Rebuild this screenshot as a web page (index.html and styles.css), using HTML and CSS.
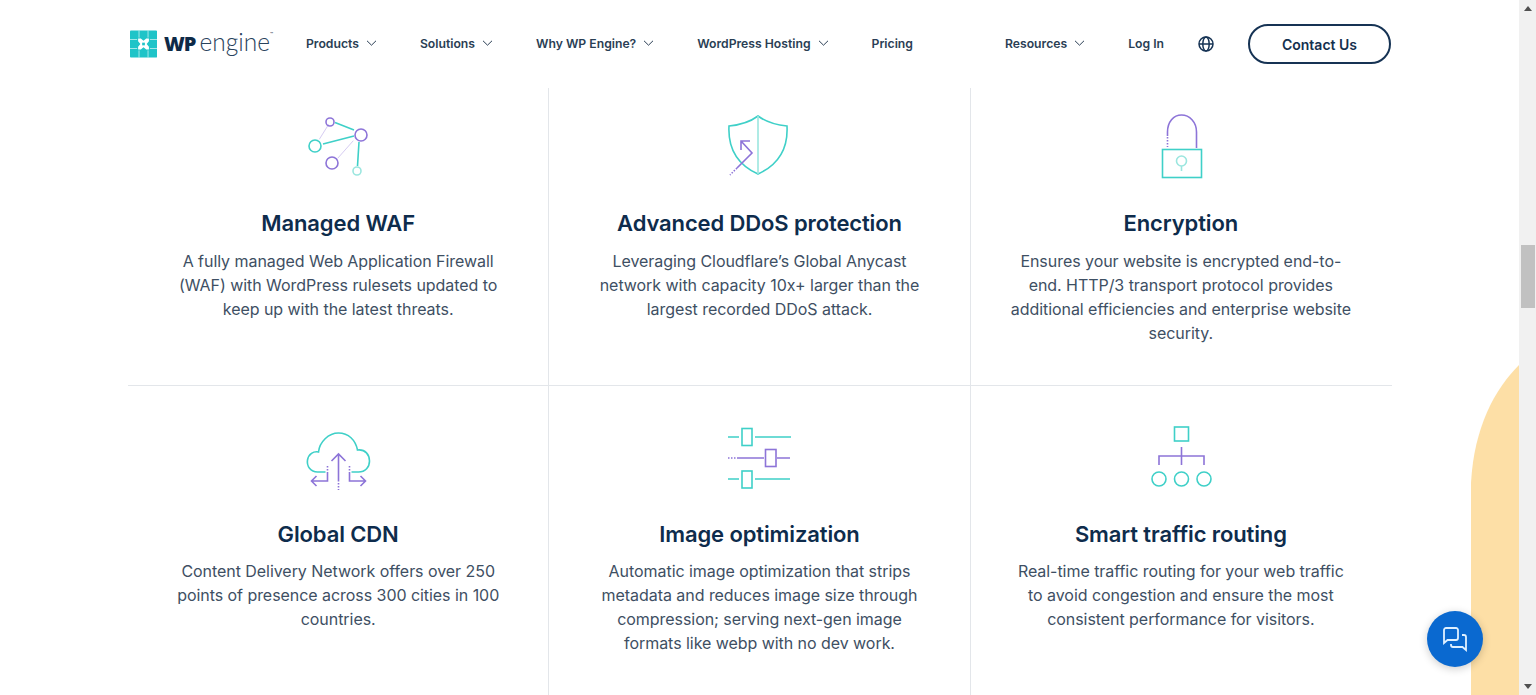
FILE: index.html
```html
<!DOCTYPE html>
<html lang="en">
<head>
  <meta charset="UTF-8" />
  <meta name="viewport" content="width=device-width, initial-scale=1.0" />
  <title>WP Engine - Security and Performance</title>
  <link rel="stylesheet" href="styles.css">
</head>
<body>
  <div class="page">
    <!-- Header -->
    <header class="site-header">
      <a class="logo" href="#">
        <svg class="logo-mark" viewBox="0 0 30 30" width="28" height="28">
          <rect width="30" height="30" rx="1" fill="#1fc4c8"/>
          <path d="M10 0v8M20 0v8M10 22v8M20 22v8M0 10h8M0 20h8M22 10h8M22 20h8" stroke="#d8f5f5" stroke-width=".8"/>
          <path d="M9 9h3l3 2.500 3-2.500h3v3l-2.500 3 2.500 3v3h-3l-3-2.500-3 2.500H9v-3l2.500-3L9 12z" fill="#fff"/>
          <rect x="13.500" y="13.500" width="3" height="3" fill="#1fc4c8"/>
        </svg>
        <span class="logo-wp">WP</span><span class="logo-engine">engine</span><span class="logo-tm">™</span>
      </a>
      <nav class="main-nav">
        <a href="#">Products <svg class="chev" viewBox="0 0 11 6"><path d="M1 .8l4.500 4.400L10 .8"/></svg></a>
        <a href="#">Solutions <svg class="chev" viewBox="0 0 11 6"><path d="M1 .8l4.500 4.400L10 .8"/></svg></a>
        <a href="#">Why WP Engine? <svg class="chev" viewBox="0 0 11 6"><path d="M1 .8l4.500 4.400L10 .8"/></svg></a>
        <a href="#">WordPress Hosting <svg class="chev" viewBox="0 0 11 6"><path d="M1 .8l4.500 4.400L10 .8"/></svg></a>
        <a href="#">Pricing</a>
      </nav>
      <div class="right-nav">
        <a href="#">Resources <svg class="chev" viewBox="0 0 11 6"><path d="M1 .8l4.500 4.400L10 .8"/></svg></a>
        <a href="#">Log In</a>
        <svg class="globe" viewBox="0 0 16 16" width="16" height="16">
          <circle cx="8" cy="8" r="7"/>
          <ellipse cx="8" cy="8" rx="3.200" ry="7"/>
          <path d="M1 8h14"/>
        </svg>
        <a class="contact-btn" href="#">Contact Us</a>
      </div>
    </header>

    <!-- Feature grid -->
    <main class="features">
      <section class="feature first-row">
        <svg class="feature-icon" viewBox="-2 0 100 90" width="100" height="90">
          <path class="thin-purple" d="M38.700 24.300L29.300 39.300M63.300 40.700L47.700 58.300"/>
          <path class="teal" d="M45 22.500L64 30M33 44L64 36M69 42L67.500 66"/>
          <circle class="purple" cx="40" cy="22" r="4"/>
          <circle class="purple" cx="71" cy="35" r="6"/>
          <circle class="teal" cx="25" cy="46" r="6"/>
          <circle class="purple" cx="42" cy="63" r="6"/>
          <circle class="teal light" cx="67" cy="71" r="4"/>
        </svg>
        <h3>Managed WAF</h3>
        <p>A fully managed Web Application Firewall (WAF) with WordPress rulesets updated to keep up with the latest threats.</p>
      </section>
      <section class="feature first-row">
        <svg class="feature-icon" viewBox="-1 0 100 90" width="100" height="90">
          <path class="teal" d="M48 16C40 22 29 25 19 26C18 45 24 63 48 74C72 63 78 45 77 26C67 25 56 22 48 16Z"/>
          <path class="teal light" d="M48 16V74"/>
          <path class="purple" d="M31 41L42 53L27 68M31 50V41H40"/>
          <path class="purple dotted" d="M27 68L20 75"/>
        </svg>
        <h3>Advanced DDoS protection</h3>
        <p>Leveraging Cloudflare’s Global Anycast network with capacity 10x+ larger than the largest recorded DDoS attack.</p>
      </section>
      <section class="feature first-row no-border">
        <svg class="feature-icon" viewBox="0.500 0 100 90" width="100" height="90">
          <path class="purple" d="M37 36V32C37 22 43 15 51 15C59 15 66 22 66 32V48"/>
          <path class="purple dotted" d="M37 37V47"/>
          <rect class="teal" x="32" y="49.500" width="39" height="28"/>
          <circle class="teal light" cx="51" cy="61" r="5"/>
          <path class="teal light" d="M51 66V71"/>
        </svg>
        <h3>Encryption</h3>
        <p>Ensures your website is encrypted end-to-end. HTTP/3 transport protocol provides additional efficiencies and enterprise website security.</p>
      </section>
      <section class="feature">
        <svg class="feature-icon" viewBox="-1.500 0 100 81" width="100" height="81">
          <path class="teal" d="M36 52H28C21 52 17 46 18 40C19 34 24 31 29 32C30 22 39 13 49 13C59 13 66 20 68 30C76 29 80 35 80 41C80 47 76 52 69 52H62"/>
          <path class="purple" d="M49 60V34M42 41L49 34L56 41M38 53V61H22M27 56L22 61L27 66M60 53V61H76M71 56L76 61L71 66"/>
          <path class="purple dotted" d="M38 46V53M60 46V53M49 60V70"/>
        </svg>
        <h3>Global CDN</h3>
        <p>Content Delivery Network offers over 250 points of presence across 300 cities in 100 countries.</p>
      </section>
      <section class="feature">
        <svg class="feature-icon" viewBox="-1 0 100 81" width="100" height="81">
          <path class="teal" d="M18 17H29M45 17H81M18 59H29M45 59H80"/>
          <rect class="teal" x="32" y="8.500" width="10" height="17"/>
          <rect class="teal" x="32" y="51" width="10" height="17"/>
          <path class="purple" d="M27 38H54M67 38H80"/>
          <path class="purple dotted" d="M18 38H27"/>
          <rect class="purple" x="55.500" y="29.500" width="10.500" height="17"/>
        </svg>
        <h3>Image optimization</h3>
        <p>Automatic image optimization that strips metadata and reduces image size through compression; serving next-gen image formats like webp with no dev work.</p>
      </section>
      <section class="feature no-border">
        <svg class="feature-icon" viewBox="0.500 0 100 81" width="100" height="81">
          <rect class="teal" x="44" y="7" width="14" height="14"/>
          <path class="purple" d="M51 27V45M28.500 45V36H73.500V45"/>
          <circle class="teal" cx="28.500" cy="59" r="7"/>
          <circle class="teal" cx="51" cy="59" r="7"/>
          <circle class="teal" cx="73.500" cy="59" r="7"/>
        </svg>
        <h3>Smart traffic routing</h3>
        <p>Real-time traffic routing for your web traffic to avoid congestion and ensure the most consistent performance for visitors.</p>
      </section>
    </main>

    <!-- Decorative curve on the right edge -->
    <svg class="side-curve" viewBox="0 0 48 330" width="48" height="330">
      <path d="M48 0C24 24 3 62 0 118V330H48Z"/>
    </svg>

    <a class="chat-btn" href="#" aria-label="Chat">
      <svg viewBox="0 0 26 26" width="26" height="26">
        <path d="M16 11V4a2 2 0 0 0-2-2H4a2 2 0 0 0-2 2V17l3.500-3H14a2 2 0 0 0 2-2z"/>
        <path d="M20 9h2a2 2 0 0 1 2 2v13l-3.500-3H11a2 2 0 0 1-2-2v-1"/>
      </svg>
    </a>
  </div>

  <div class="scrollbar">
    <span class="arrow-up"></span>
    <div class="thumb"></div>
    <span class="arrow-down"></span>
  </div>
</body>
</html>
```

FILE: styles.css
```css
html, body {
  height: 100%;
  margin: 0;
}
body {
  display: flex;
  overflow: hidden;
  background: #fff;
  font-family: Inter, "Liberation Sans", sans-serif;
  color: #0e2a47;
}
a {
  color: inherit;
  text-decoration: none;
}
.page {
  position: relative;
  flex: 1;
  overflow: hidden;
}

/* Header */
.site-header {
  display: flex;
  align-items: center;
  height: 88px;
  padding: 0 128px 0 130px;
  box-sizing: border-box;
}
.logo {
  display: flex;
  align-items: center;
  width: 143px;
  margin-right: 33px;
  margin-bottom: 1px;
  color: #0e2a47;
}
.logo-mark {
  margin-right: 7px;
}
.logo-wp {
  font-family: "Open Sans", sans-serif;
  font-size: 20px;
  font-weight: 800;
  letter-spacing: -1px;
  margin-right: 4px;
}
.logo-engine {
  font-family: Lato, sans-serif;
  font-size: 24.5px;
  font-weight: 300;
  color: #28425c;
  line-height: 1;
  margin-top: -2px;
}
.logo-tm {
  font-size: 5px;
  align-self: flex-start;
  margin-top: 1px;
}
.main-nav, .right-nav {
  display: flex;
  align-items: center;
  gap: 43px;
  font-size: 12.2px;
  font-weight: 600;
  color: #2a3e54;
}
.right-nav {
  margin-left: auto;
}
.main-nav a, .right-nav a {
  display: flex;
  align-items: center;
  margin-bottom: 2px;
}
.chev {
  width: 11px;
  height: 6px;
  margin-left: 7px;
  fill: none;
  stroke: #2a3e54;
  stroke-width: 1;
}
.globe {
  margin: 0 -9px 0 -9px;
  fill: none;
  stroke: #163354;
  stroke-width: 1.5;
}
.right-nav .contact-btn {
  justify-content: center;
  width: 143px;
  height: 40px;
  margin-bottom: 0;
  box-sizing: border-box;
  border: 2px solid #163354;
  border-radius: 20px;
  font-size: 14px;
  color: #14304e;
}

/* Feature grid */
.features {
  display: grid;
  grid-template-columns: repeat(3, 1fr);
  margin: 0 127px 0 128px;
}
.feature {
  box-sizing: border-box;
  padding: 34px 39px 0;
  height: 310px;
  text-align: center;
  border-right: 1px solid #e3e6ea;
}
.first-row {
  height: 298px;
  padding-top: 12px;
  border-bottom: 1px solid #e3e6ea;
}
.no-border {
  border-right: none;
  padding-right: 40px;
}
.feature-icon {
  display: block;
  margin: 0 auto 18px;
}
.feature h3 {
  margin: 0 0 10px;
  font-size: 22px;
  line-height: 30px;
  font-weight: 600;
  letter-spacing: -0.12px;
  color: #0e2c4c;
}
.first-row h3 {
  margin-bottom: 11px;
}
.feature p {
  margin: 0;
  font-size: 16px;
  line-height: 24px;
  letter-spacing: -0.05px;
  color: #3e4f63;
}

/* Icon strokes */
.feature-icon * {
  fill: none;
  stroke-width: 1.6;
}
.feature-icon .teal {
  stroke: #3fd0c8;
}
.feature-icon .purple {
  stroke: #8d74d8;
}
.feature-icon .light {
  stroke: #9be6df;
}
.feature-icon .thin-purple {
  stroke: #d6ccf2;
  stroke-width: 1;
}
.feature-icon .dotted {
  stroke-dasharray: 1.5 1.5;
}

/* Overlays */
.side-curve {
  position: absolute;
  right: 0;
  top: 365px;
  fill: #fddfa6;
}
.chat-btn {
  position: absolute;
  left: 1427px;
  top: 611px;
  display: flex;
  align-items: center;
  justify-content: center;
  width: 56px;
  height: 56px;
  border-radius: 50%;
  background: #0a69d0;
  box-shadow: 0 2px 8px rgba(0, 0, 0, 0.2);
}
.chat-btn svg {
  fill: none;
  stroke: #dff0ff;
  stroke-width: 1.8;
}

/* Scrollbar */
.scrollbar {
  display: flex;
  flex-direction: column;
  align-items: center;
  width: 17px;
  flex-shrink: 0;
  background: #f1f1f1;
}
.thumb {
  width: 14px;
  height: 63px;
  margin-top: 234px;
  background: #c1c1c1;
}
.arrow-up, .arrow-down {
  width: 0;
  height: 0;
  border-left: 4px solid transparent;
  border-right: 4px solid transparent;
}
.arrow-up {
  margin-top: 6px;
  border-bottom: 5px solid #505050;
}
.arrow-down {
  margin-top: auto;
  margin-bottom: 6px;
  border-top: 5px solid #505050;
}
```
